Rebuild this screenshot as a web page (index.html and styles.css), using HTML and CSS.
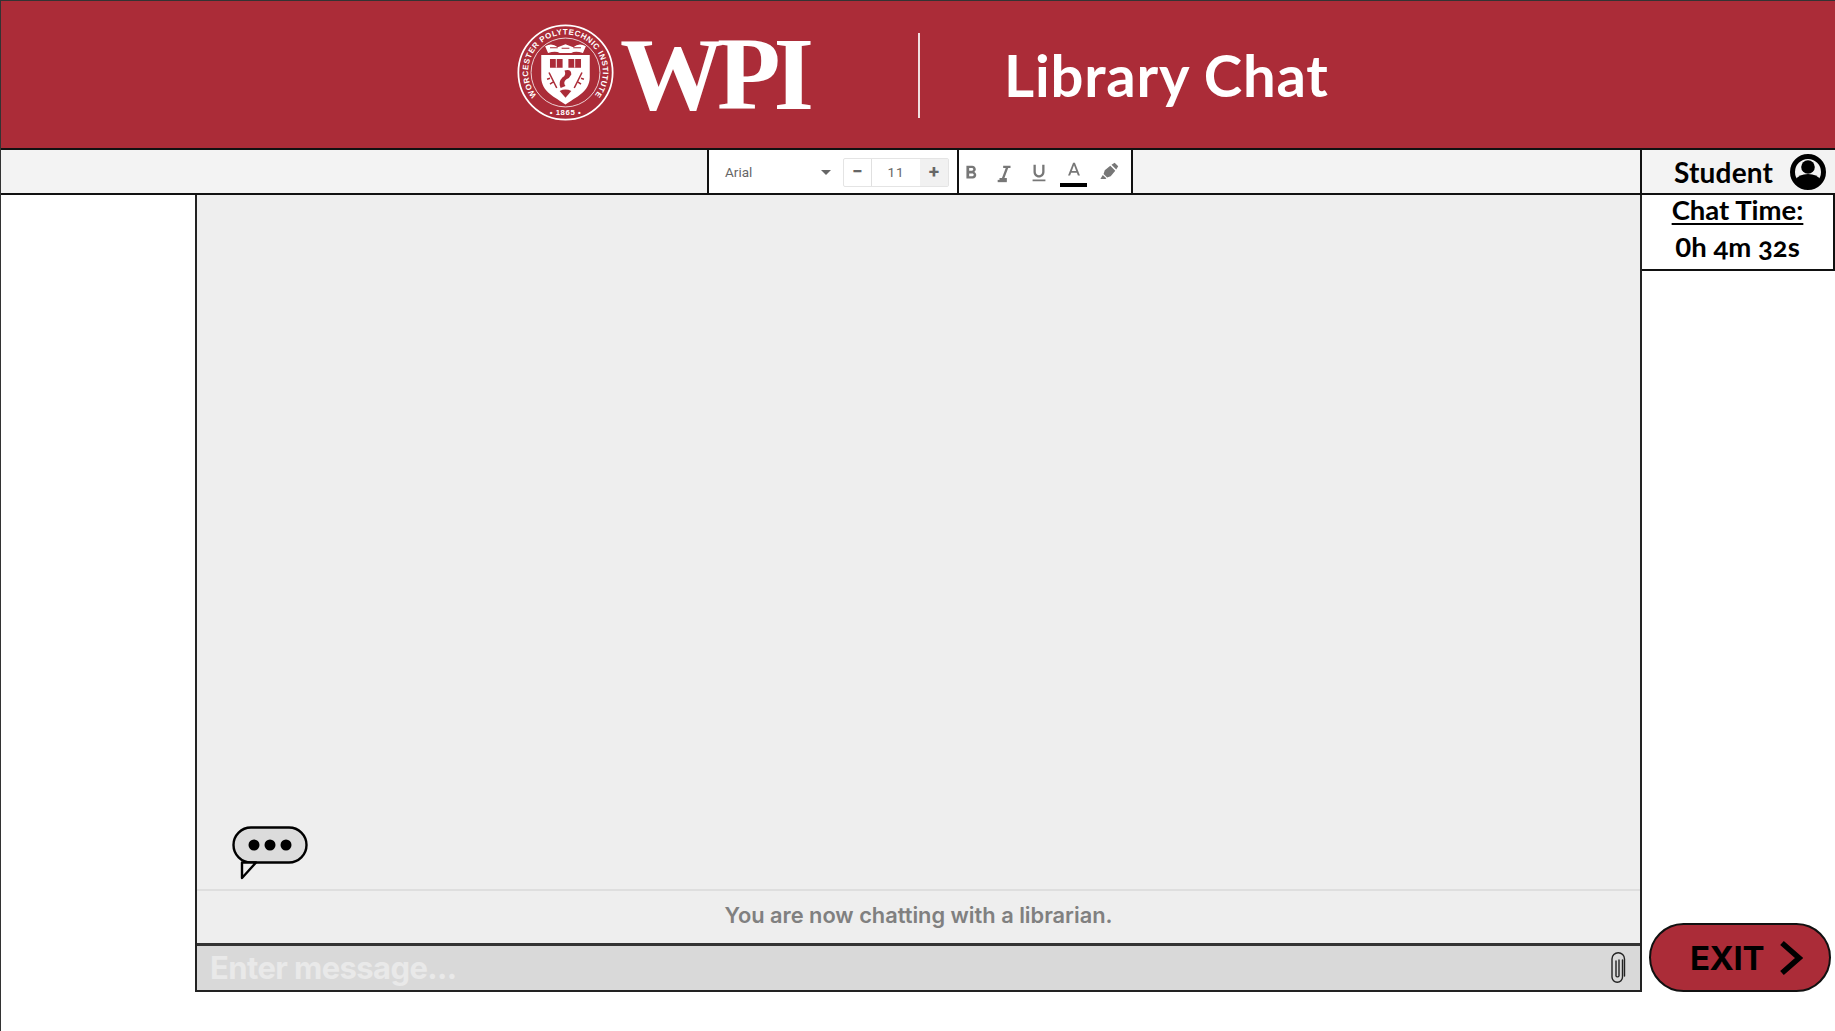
FILE: index.html
```html
<!DOCTYPE html>
<html lang="en">
<head>
<meta charset="utf-8">
<title>Library Chat</title>
<link rel="stylesheet" href="styles.css">
</head>
<body>
<div class="app">
  <header class="banner">
    <svg class="seal" viewBox="0 0 100 100">
      <defs>
        <path id="ringTop" d="M25.500 79 A38.500 38.500 0 1 1 74.500 79"/>
      </defs>
      <circle cx="50" cy="50" r="48.600" fill="none" stroke="#fff" stroke-width="1.800"/>
      <circle cx="50" cy="50" r="35.500" fill="none" stroke="#fff" stroke-width=".8"/>
      <text class="seal-text"><textPath href="#ringTop" startOffset="50%" text-anchor="middle">WORCESTER POLYTECHNIC INSTITUTE</textPath></text>
      <text class="seal-year" x="50" y="94" text-anchor="middle">• 1865 •</text>
      <path d="M25 32 H75 V55 C75 70 60 76 50 83 C40 76 25 70 25 55 Z" fill="#fff"/>
      <path d="M29 23 Q36 19 42 24 L50 21 L58 24 Q64 19 71 23 L68 30 Q60 27 56 30 H44 Q40 27 32 30 Z" fill="#fff"/>
      <path d="M34 24.500 H42 M58 24.500 H66 M46 25 H54" stroke="#ab2c38" stroke-width="1.200"/>
      <path d="M34 36 H47 V45 H34 Z M53 36 H66 V45 H53 Z" fill="#ab2c38"/>
      <path d="M40.500 36 V45 M59.500 36 V45" stroke="#fff" stroke-width="1"/>
      <path d="M49 48 Q56 46 56 52 Q54 56 51 57 Q47 60 50 64 L45 66 Q42 60 47 55 Q51 53 49 48 Z" fill="#ab2c38"/>
      <path d="M33 50 L41 66 M34 56 L31 57 M37 60 L34 62 M67 50 L59 66 M66 56 L69 57 M63 60 L66 62" stroke="#ab2c38" stroke-width="1.600" fill="none"/>
      <path d="M50 76 L44 69 Q50 66 56 69 Z" fill="#ab2c38"/>
    </svg>
    <span class="wordmark">WPI</span>
    <span class="rule"></span>
    <h1 class="title">Library Chat</h1>
  </header>

  <div class="toolbar">
    <div class="bar-fill bar-left"></div>
    <div class="tools">
      <div class="font-group">
        <span class="font-name">Arial</span>
        <span class="caret"></span>
        <div class="stepper">
          <span class="step">−</span>
          <span class="size">11</span>
          <span class="step step-on">+</span>
        </div>
      </div>
      <div class="format-group">
        <svg class="ico ico-b" viewBox="0 0 24 24"><path d="M15.600 10.790c.97-.67 1.650-1.770 1.650-2.790 0-2.260-1.750-4-4-4H7v14h7.040c2.090 0 3.710-1.700 3.710-3.790 0-1.520-.86-2.820-2.150-3.420zM10 6.500h3c.83 0 1.500.67 1.500 1.500s-.67 1.500-1.500 1.500h-3v-3zm3.500 9H10v-3h3.500c.83 0 1.500.67 1.500 1.500s-.67 1.500-1.500 1.500z"/></svg>
        <svg class="ico ico-i" viewBox="0 0 24 24"><path d="M10 4v2.500h2.800L8.700 17.500H6V20h8v-2.500h-2.600l4.100-11H18V4z"/><path d="M4 19.500h10V22H4z"/></svg>
        <svg class="ico ico-u" viewBox="0 0 24 24"><path d="M12 17c3.310 0 6-2.690 6-6V3h-2.500v8c0 1.930-1.570 3.500-3.500 3.500S8.500 12.930 8.500 11V3H6v8c0 3.310 2.690 6 6 6zm-7 2v2h14v-2H5z"/></svg>
        <span class="color-a">
          <svg class="ico ico-a" viewBox="0 0 24 24"><path d="M11 3L5.500 17h2.250l1.120-3h6.250l1.120 3h2.250L13 3h-2zm-1.380 9L12 5.670 14.380 12H9.620z"/></svg>
          <span class="color-bar"></span>
        </span>
        <svg class="ico ico-p" viewBox="0 0 24 24"><path d="M14.500 3.500 L20.500 9.500 L23 5.500 L18.500 1 Z M13 4.700 L6 10.500 L4.500 15 L9 19.500 L13.500 18 L19.300 11 Z M3.500 16.500 L0.500 21.500 L7 21.500 L8 20.500 Z"/></svg>
      </div>
    </div>
    <div class="bar-fill bar-right"></div>
    <div class="user">
      <span class="user-name">Student</span>
      <svg class="avatar" viewBox="0 0 36 36">
        <circle cx="18" cy="18" r="15.500" fill="none" stroke="#000" stroke-width="5"/>
        <circle cx="18" cy="13" r="6.800" fill="#000"/>
        <path d="M5 26 Q9 20 18 20 Q27 20 31 26 Q26 34 18 34 Q10 34 5 26 Z" fill="#000"/>
      </svg>
    </div>
  </div>

  <div class="content">
    <div class="gutter"></div>
    <main class="chat">
      <div class="log">
        <svg class="typing" viewBox="0 0 78 54">
          <path d="M20 1.500 H58 A17.500 17.500 0 0 1 58 36.500 H20 A17.500 17.500 0 0 1 20 1.500 Z" fill="#dcdcdc" stroke="#000" stroke-width="2.400"/>
          <path d="M11 36.500 V52 L25 36.500 Z" fill="#eee" stroke="#000" stroke-width="2.400" stroke-linejoin="round"/>
          <circle cx="23" cy="19" r="5.500"/><circle cx="39" cy="19" r="5.500"/><circle cx="55" cy="19" r="5.500"/>
        </svg>
      </div>
      <div class="notice">You are now chatting with a librarian.</div>
      <div class="composer">
        <span class="placeholder">Enter message...</span>
        <svg class="clip" viewBox="0 0 18 34">
          <path d="M13.500 9 V26 A5 5 0 0 1 3 26 V8 A6 6 0 0 1 15.500 8 V25 M7 10 V25 A1.700 1.700 0 0 0 10 25 V9" fill="none" stroke="#222" stroke-width="1.400" stroke-linecap="round"/>
        </svg>
      </div>
    </main>
    <aside class="side">
      <div class="timer">
        <div class="timer-label">Chat Time:</div>
        <div class="timer-value"><span class="lining">0</span>h 4m 32s</div>
      </div>
      <button class="exit" type="button">EXIT
        <svg class="chev" viewBox="0 0 24 36"><path d="M3 3 L20 18 L3 33" fill="none" stroke="#000" stroke-width="5.500"/></svg>
      </button>
    </aside>
  </div>
</div>
</body>
</html>
```
FILE: styles.css
```css
* { box-sizing: border-box; }
html, body { margin: 0; height: 100%; background: #fff; }
.app {
  width: 1835px;
  height: 1031px;
  display: flex;
  flex-direction: column;
  overflow: hidden;
  font-family: Lato, "Liberation Sans", sans-serif;
  border-left: 1px solid #333;
}
.banner {
  height: 148px;
  flex: none;
  background: #ab2c38;
  border-top: 1px solid #333;
  display: flex;
  align-items: center;
  padding-left: 516px;
  color: #fff;
}
.seal { width: 97px; height: 97px; flex: none; margin-top: -4px; }
.seal-text { font: 700 8.200px "Liberation Sans", sans-serif; fill: #fff; letter-spacing: .5px; }
.seal-year { font: 700 8px "Liberation Sans", sans-serif; fill: #fff; letter-spacing: .6px; }
.wordmark {
  font: 700 104px/1 "Liberation Serif", serif;
  letter-spacing: -7px;
  margin-left: 6px;
  width: 198px;
  margin-top: -2px;
}
.rule { width: 2px; height: 85px; background: #f1dfe0; margin-left: 100px; margin-top: 2px; }
.title {
  margin: 1px 0 0 84px;
  font: 700 58px/1 Lato, sans-serif;
  letter-spacing: .8px;
  color: #fff;
}
.toolbar {
  height: 47px;
  flex: none;
  display: flex;
  background: #f3f3f3;
  border-top: 2px solid #111;
  border-bottom: 2px solid #111;
}
.bar-fill { height: 100%; }
.bar-left { width: 706px; }
.bar-right { flex: 1; }
.tools {
  width: 426px;
  display: flex;
  background: #fff;
  border-left: 2px solid #111;
  border-right: 2px solid #111;
}
.font-group {
  width: 250px;
  display: flex;
  align-items: center;
  border-right: 2px solid #111;
  padding: 1px 0 0 16px;
  color: #666;
  font: 13.500px Roboto, sans-serif;
}
.font-name { width: 96px; }
.caret {
  width: 0; height: 0;
  border-left: 5px solid transparent;
  border-right: 5px solid transparent;
  border-top: 5px solid #666;
  margin-right: 12px;
}
.stepper {
  display: flex;
  width: 106px;
  height: 29px;
  border: 1px solid #e4e4e4;
  border-radius: 2px;
  align-items: stretch;
  text-align: center;
}
.step { width: 28px; font: 700 19px/26px Roboto, sans-serif; color: #666; }
.step:first-child { border-right: 1px solid #e0e0e0; }
.step-on { background: #f1f1f1; }
.size { flex: 1; line-height: 27px; letter-spacing: 1px; }
.format-group {
  flex: 1;
  display: flex;
  align-items: center;
  padding: 2px 0 0 1px;
  gap: 12px;
}
.ico { width: 22px; height: 22px; fill: #777; flex: none; }
.color-a { display: flex; flex-direction: column; align-items: center; width: 27px; margin: 2px 0 0 -2px; }
.ico-a { margin-top: -1px; }
.color-bar { width: 27px; height: 4px; background: #000; margin-top: 1px; }
.ico-p { width: 19px; height: 19px; margin: -3px 0 0 1px; }
.user {
  width: 195px;
  border-left: 2px solid #111;
  display: flex;
  align-items: center;
  padding-left: 32px;
  font: 700 28px Lato, sans-serif;
  color: #000;
}
.user-name { letter-spacing: .2px; }
.avatar { width: 36px; height: 36px; margin-left: 17px; }
.content { flex: 1; display: flex; min-height: 0; }
.gutter { width: 194px; flex: none; }
.chat {
  width: 1447px;
  height: 797px;
  flex: none;
  display: flex;
  flex-direction: column;
  background: #eee;
  border-left: 2px solid #222;
  border-right: 2px solid #222;
  border-bottom: 2px solid #222;
}
.log {
  flex: 1;
  display: flex;
  align-items: flex-end;
  padding: 0 0 9px 34px;
  border-bottom: 2px solid #dedede;
}
.typing { width: 78px; height: 54px; display: block; }
.notice {
  height: 52px;
  flex: none;
  display: flex;
  align-items: center;
  justify-content: center;
  padding-bottom: 4px;
  font: 600 21.800px Inter, sans-serif;
  color: #808080;
}
.composer {
  height: 47px;
  flex: none;
  display: flex;
  align-items: center;
  justify-content: space-between;
  padding: 0 13px 0 13px;
  background: #d9d9d9;
  border-top: 3px solid #333;
}
.placeholder { font: 700 31px Inter, sans-serif; color: #e9e9e9; letter-spacing: -.6px; margin-top: -1px; }
.clip { width: 18px; height: 34px; }
.side { flex: 1; display: flex; flex-direction: column; justify-content: space-between; height: 797px; min-width: 0; }
.timer {
  height: 76px;
  border-right: 2px solid #111;
  border-bottom: 2px solid #111;
  text-align: center;
  color: #000;
  font-weight: 700;
  font-size: 27.500px;
  font-feature-settings: "onum";
}
.timer-label { text-decoration: underline; text-underline-offset: 3px; line-height: 30px; }
.timer-value { line-height: 42px; padding-top: 1px; }
.lining { font-feature-settings: "lnum"; }
.exit {
  align-self: center;
  width: 182px;
  height: 69px;
  margin-left: 2px;
  border: 2px solid #111;
  border-radius: 35px;
  background: #ab2c38;
  color: #000;
  font: 700 33px Inter, sans-serif;
  letter-spacing: -.4px;
  display: flex;
  align-items: center;
  justify-content: center;
  gap: 15px;
  padding: 0 0 0 14px;
}
.chev { width: 24px; height: 36px; }
```
